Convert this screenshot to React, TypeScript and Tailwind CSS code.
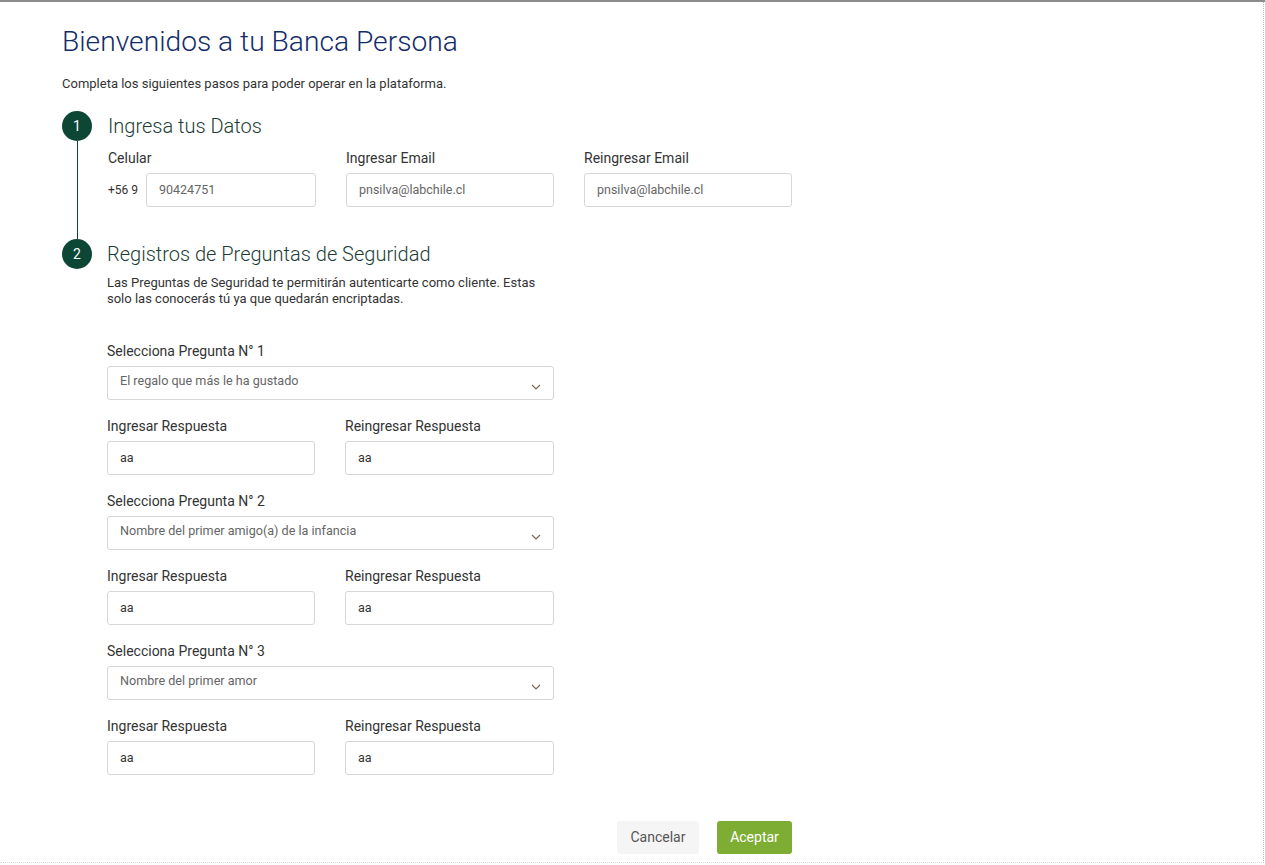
const font = { fontFamily: 'Roboto, "Liberation Sans", Arial, sans-serif' };

function Chevron() {
  return (
    <svg className="w-[10px] h-[6px] mt-[8px]" viewBox="0 0 10 6" fill="none">
      <path d="M1 1l4 4 4-4" stroke="#7a6a5a" strokeWidth="1.2" />
    </svg>
  );
}

function Field({ label, value, muted }: { label: string; value: string; muted?: boolean }) {
  return (
    <div className="flex flex-col">
      <label className="text-[14px] leading-[16px] text-[#333] mb-[7px]">{label}</label>
      <div className="h-[34px] border border-[#d6d6d6] rounded-[3px] flex items-center px-[12px]">
        <span className={`text-[12.5px] ${muted ? 'text-[#666]' : 'text-[#333]'}`}>{value}</span>
      </div>
    </div>
  );
}

function Question({ n, value }: { n: number; value: string }) {
  return (
    <div className="flex flex-col">
      <label className="text-[14px] leading-[16px] text-[#333] mb-[7px]">Selecciona Pregunta N° {n}</label>
      <div className="h-[34px] border border-[#d6d6d6] rounded-[3px] flex items-center justify-between pl-[12px] pr-[12px]">
        <span className="text-[12.6px] text-[#666] -mt-[3px]">{value}</span>
        <Chevron />
      </div>
      <div className="grid grid-cols-[208px_209px] gap-x-[30px] mt-[18px]">
        <Field label="Ingresar Respuesta" value="aa" />
        <Field label="Reingresar Respuesta" value="aa" />
      </div>
    </div>
  );
}

function StepCircle({ n }: { n: number }) {
  return (
    <div className="w-[30px] h-[30px] rounded-full bg-[#0c4635] text-white text-[14px] flex items-center justify-center shrink-0">
      {n}
    </div>
  );
}

export default function App() {
  return (
    <div className="w-[1265px] h-[865px] bg-white border-t-2 border-[#8c8c8c] overflow-hidden" style={font}>
      <div className="h-[861px] border-r border-dotted border-[#b5b5b5] border-b border-b-[#dcdcdc] mr-[1px]">
        <div className="pl-[62px] pt-[23px] w-[792px]">
          <h1 className="text-[28.2px] leading-[34px] font-light text-[#142c6a]">Bienvenidos a tu Banca Persona</h1>
          <p className="text-[13px] leading-[16px] text-[#333] mt-[17px]">
            Completa los siguientes pasos para poder operar en la plataforma.
          </p>

          {/* Paso 1 */}
          <div className="flex mt-[19px]">
            <div className="w-[46px] flex flex-col">
              <StepCircle n={1} />
              <div className="w-px flex-1 bg-[#0c4635] ml-[14.5px]" />
            </div>
            <div className="flex-1 pb-[32px]">
              <div className="h-[30px] flex items-center text-[20px] font-light text-[#1c3d36]">Ingresa tus Datos</div>
              <div className="grid grid-cols-[208px_208px_208px] gap-x-[30px] mt-[9px]">
                <div className="flex flex-col">
                  <label className="text-[14px] leading-[16px] text-[#333] mb-[7px]">Celular</label>
                  <div className="flex items-center">
                    <span className="text-[12px] text-[#333] w-[38px]">+56 9</span>
                    <div className="flex-1 h-[34px] border border-[#d6d6d6] rounded-[3px] flex items-center px-[12px]">
                      <span className="text-[12.5px] text-[#666]">90424751</span>
                    </div>
                  </div>
                </div>
                <Field label="Ingresar Email" value="pnsilva@labchile.cl" muted />
                <Field label="Reingresar Email" value="pnsilva@labchile.cl" muted />
              </div>
            </div>
          </div>

          {/* Paso 2 */}
          <div className="flex">
            <div className="w-[45px]">
              <StepCircle n={2} />
            </div>
            <div className="w-[447px]">
              <div className="h-[30px] flex items-center text-[20px] font-light text-[#1c3d36]">
                Registros de Preguntas de Seguridad
              </div>
              <p className="text-[13px] leading-[16px] text-[#333] mt-[6px] pr-[1px]">
                Las Preguntas de Seguridad te permitirán autenticarte como cliente. Estas solo las conocerás tú ya que quedarán encriptadas.
              </p>
              <div className="flex flex-col gap-[18px] mt-[36px]">
                <Question n={1} value="El regalo que más le ha gustado" />
                <Question n={2} value="Nombre del primer amigo(a) de la infancia" />
                <Question n={3} value="Nombre del primer amor" />
              </div>
            </div>
          </div>

          <div className="flex justify-end gap-[18px] mt-[46px]">
            <button className="w-[82px] h-[33px] rounded-[3px] bg-[#f5f5f5] text-[14px] text-[#555]">Cancelar</button>
            <button className="w-[75px] h-[33px] rounded-[3px] bg-[#7dad33] text-[14px] text-white">Aceptar</button>
          </div>
        </div>
      </div>
    </div>
  );
}
